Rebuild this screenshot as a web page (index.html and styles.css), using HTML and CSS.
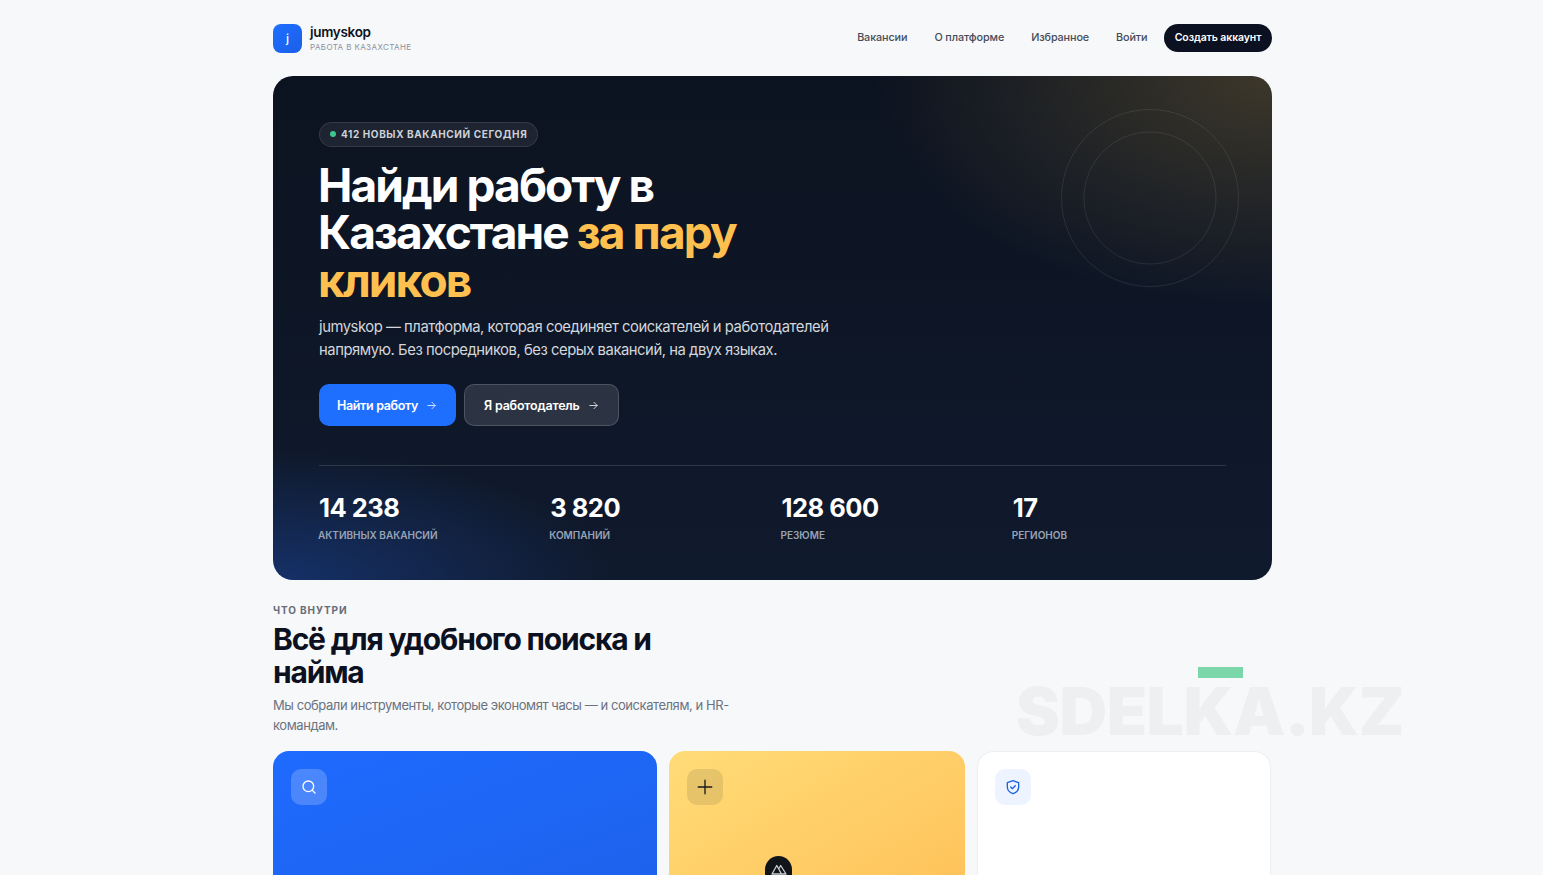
FILE: index.html
```html
<!DOCTYPE html>
<html lang="ru">
<head>
  <meta charset="UTF-8">
  <meta name="viewport" content="width=device-width, initial-scale=1.0">
  <title>jumyskop</title>
  <link rel="stylesheet" href="styles.css">
</head>
<body>
  <div class="page">
    <header class="topbar">
      <div class="brand">
        <div class="brand-mark">j</div>
        <div>
          <div class="brand-name">jumyskop</div>
          <div class="brand-sub">Работа в Казахстане</div>
        </div>
      </div>
      <nav class="nav">
        <a href="#">Вакансии</a>
        <a href="#">О платформе</a>
        <a href="#">Избранное</a>
        <a href="#">Войти</a>
        <a href="#" class="nav-cta">Создать аккаунт</a>
      </nav>
    </header>

    <section class="hero">
      <svg class="hero-rings" width="180" height="180" viewBox="0 0 180 180" fill="none" stroke="#fff" stroke-opacity=".09">
        <circle cx="90" cy="90" r="88.5"/>
        <circle cx="90" cy="90" r="66"/>
      </svg>
      <div class="hero-badge"><span class="dot"></span>412 новых вакансий сегодня</div>
      <h1>Найди работу в Казахстане <span class="accent">за пару кликов</span></h1>
      <p class="hero-text">jumyskop — платформа, которая соединяет соискателей и работодателей напрямую. Без посредников, без серых вакансий, на двух языках.</p>
      <div class="hero-actions">
        <a href="#" class="btn btn-primary">Найти работу
          <svg width="11" height="11" viewBox="0 0 24 24" fill="none" stroke="currentColor" stroke-width="2" stroke-linecap="round" stroke-linejoin="round"><path d="M4 12h16M13 5l7 7-7 7"/></svg>
        </a>
        <a href="#" class="btn btn-ghost">Я работодатель
          <svg width="11" height="11" viewBox="0 0 24 24" fill="none" stroke="currentColor" stroke-width="2" stroke-linecap="round" stroke-linejoin="round"><path d="M4 12h16M13 5l7 7-7 7"/></svg>
        </a>
      </div>
      <div class="stats">
        <div><div class="stat-num">14 238</div><div class="stat-label">Активных вакансий</div></div>
        <div><div class="stat-num">3 820</div><div class="stat-label">Компаний</div></div>
        <div><div class="stat-num">128 600</div><div class="stat-label">Резюме</div></div>
        <div><div class="stat-num">17</div><div class="stat-label">Регионов</div></div>
      </div>
    </section>

    <section class="features">
      <div class="eyebrow">Что внутри</div>
      <h2>Всё для удобного поиска и найма</h2>
      <p class="features-text">Мы собрали инструменты, которые экономят часы — и соискателям, и HR-командам.</p>
      <div class="cards">
        <div class="card card-blue">
          <div class="card-icon">
            <svg width="16" height="16" viewBox="0 0 24 24" fill="none" stroke="currentColor" stroke-width="2" stroke-linecap="round"><circle cx="11" cy="11" r="8"/><path d="M21 21l-4.3-4.3"/></svg>
          </div>
        </div>
        <div class="card card-yellow">
          <div class="card-icon">
            <svg width="18" height="18" viewBox="0 0 24 24" fill="none" stroke="currentColor" stroke-width="1.8" stroke-linecap="round"><path d="M12 3v18M3 12h18"/></svg>
          </div>
        </div>
        <div class="card card-white">
          <div class="card-icon">
            <svg width="16" height="16" viewBox="0 0 24 24" fill="none" stroke="currentColor" stroke-width="2" stroke-linecap="round" stroke-linejoin="round"><path d="M12 2.500l8.500 3v6.500c0 5-3.600 8.300-8.500 9.800-4.900-1.500-8.500-4.800-8.500-9.800V5.500z"/><path d="M8.500 12l2.500 2.500 4.500-4.500"/></svg>
          </div>
        </div>
      </div>
    </section>
  </div>

  <div class="nuxt-badge">
    <svg width="16" height="12" viewBox="0 0 16 12" fill="none" stroke="#c9ccd1" stroke-width="1.3" stroke-linejoin="round"><path d="M1 11L5.800 2.500 10.500 11zM8 5.500L9.700 2.500 15 11h-4.500"/></svg>
  </div>
  <div class="mark-green"></div>
  <div class="watermark">SDELKA.KZ</div>
</body>
</html>
```

FILE: styles.css
```css
html, body {
  height: 875px;
  overflow: hidden;
}
body {
  margin: 0;
  padding: 0;
  background-color: #f7f8fa;
  font-family: Inter, "Noto Sans", sans-serif;
  color: #0b1120;
}
a {
  text-decoration: none;
  color: inherit;
}
.page {
  width: 999px;
  margin-left: 273px;
}
.topbar {
  display: flex;
  justify-content: space-between;
  align-items: center;
  height: 76px;
  padding-bottom: 1px;
  box-sizing: border-box;
}
.brand {
  display: flex;
  align-items: center;
  gap: 8px;
  margin-top: 2px;
}
.brand-mark {
  width: 29px;
  height: 29px;
  border-radius: 8px;
  background: linear-gradient(135deg, #1f6fff, #1a5fe8);
  color: #fff;
  font-size: 12px;
  font-weight: 500;
  display: flex;
  align-items: center;
  justify-content: center;
}
.brand-name {
  padding-top: 1px;
  font-size: 13.5px;
  font-weight: 600;
  letter-spacing: -0.3px;
  line-height: 17px;
}
.brand-sub {
  font-size: 8px;
  color: #8b919c;
  text-transform: uppercase;
  letter-spacing: 0.4px;
  line-height: 13px;
}
.nav {
  display: flex;
  align-items: center;
  gap: 27px;
  font-size: 10.8px;
  font-weight: 500;
  color: #454c59;
  letter-spacing: -0.1px;
}
.nav-cta {
  margin-left: -10.5px;
  background: #0b1120;
  color: #fff;
  font-weight: 600;
  font-size: 10.5px;
  height: 28px;
  line-height: 28px;
  width: 108px;
  text-align: center;
  border-radius: 14px;
}
.hero {
  position: relative;
  height: 504px;
  box-sizing: border-box;
  padding: 45px 46px 0;
  border-radius: 20px;
  color: #fff;
  overflow: hidden;
  background:
    radial-gradient(400px 230px at 100% 0, rgba(255, 200, 80, .2), rgba(255, 200, 80, 0) 100%),
    radial-gradient(340px 130px at 0 100%, rgba(31, 90, 210, .36), rgba(31, 90, 210, 0) 100%),
    linear-gradient(180deg, #0c1320 0%, #101a2d 100%);
}
.hero-rings {
  position: absolute;
  left: 787px;
  top: 32px;
}
.hero-badge {
  display: inline-flex;
  align-items: center;
  gap: 5px;
  height: 25px;
  box-sizing: border-box;
  padding: 0 10px;
  border-radius: 13px;
  background: rgba(255, 255, 255, .07);
  border: 1px solid rgba(255, 255, 255, .1);
  font-size: 10px;
  font-weight: 700;
  letter-spacing: 0.6px;
  text-transform: uppercase;
  color: #cdd1d8;
}
.dot {
  width: 6px;
  height: 6px;
  border-radius: 50%;
  background: #3cc58f;
}
h1 {
  margin: 15px 0 0 -1px;
  width: 480px;
  font-size: 46px;
  line-height: 47.5px;
  font-weight: 700;
  letter-spacing: -1.9px;
}
.accent {
  color: #ffc04f;
}
.hero-text {
  margin: 12px 0 0;
  width: 530px;
  font-size: 14.8px;
  line-height: 23px;
  letter-spacing: -0.45px;
  color: #d3d6dc;
}
.hero-actions {
  display: flex;
  gap: 8px;
  margin-top: 22px;
}
.btn {
  display: flex;
  align-items: center;
  gap: 8px;
  height: 42px;
  box-sizing: border-box;
  border-radius: 10px;
  font-size: 12.5px;
  font-weight: 600;
  letter-spacing: -0.2px;
}
.btn svg {
  opacity: .85;
}
.btn-primary {
  width: 137px;
  padding-left: 18px;
  background: #1f6fff;
  letter-spacing: -0.35px;
}
.btn-ghost {
  width: 155px;
  padding-left: 19px;
  background: rgba(255, 255, 255, .12);
  border: 1px solid rgba(255, 255, 255, .16);
}
.stats {
  display: grid;
  grid-template-columns: repeat(4, 1fr);
  gap: 18px;
  margin-top: 39px;
  padding-top: 27px;
  border-top: 1px solid rgba(255, 255, 255, .13);
}
.stat-num {
  font-size: 25.5px;
  font-weight: 700;
  line-height: 30px;
  letter-spacing: -0.5px;
}
.stat-label {
  margin: 5px 0 0 -1px;
  font-size: 10px;
  font-weight: 600;
  line-height: 14px;
  text-transform: uppercase;
  color: #9aa3b4;
}
.features {
  padding-top: 23px;
}
.eyebrow {
  font-size: 10px;
  font-weight: 700;
  letter-spacing: 0.9px;
  line-height: 14px;
  text-transform: uppercase;
  color: #666d79;
}
h2 {
  margin: 6px 0 0;
  width: 420px;
  font-size: 30px;
  line-height: 33px;
  font-weight: 700;
  letter-spacing: -1.2px;
}
.features-text {
  margin: 7px 0 0;
  width: 460px;
  font-size: 13px;
  line-height: 19.5px;
  letter-spacing: -0.43px;
  color: #6b7280;
}
.cards {
  display: grid;
  grid-template-columns: 1.3fr 1fr 1fr;
  gap: 12px;
  margin-top: 16px;
}
.card {
  height: 300px;
  box-sizing: border-box;
  padding: 18px;
  border-radius: 16px;
}
.card-icon {
  width: 36px;
  height: 36px;
  border-radius: 10px;
  display: flex;
  align-items: center;
  justify-content: center;
}
.card-blue {
  background: linear-gradient(160deg, #1f6bff, #1b5ce0);
  color: #fff;
}
.card-blue .card-icon {
  background: rgba(255, 255, 255, .2);
}
.card-yellow {
  background: linear-gradient(150deg, #ffdc78, #ffb54a);
  color: #1a1a1a;
}
.card-yellow .card-icon {
  background: rgba(11, 17, 32, .1);
}
.card-white {
  width: 294px;
  padding: 17px;
  background: #fff;
  border: 1px solid #eceef2;
  color: #1f62e0;
}
.card-white .card-icon {
  background: #edf3ff;
}
.nuxt-badge {
  position: absolute;
  left: 765px;
  top: 856px;
  width: 27px;
  height: 40px;
  border-radius: 14px;
  background: #111418;
  display: flex;
  justify-content: center;
  padding-top: 7px;
  box-sizing: border-box;
}
.mark-green {
  position: absolute;
  left: 1198px;
  top: 667px;
  width: 45px;
  height: 11px;
  background: #7bd6a9;
}
.watermark {
  position: absolute;
  left: 1016px;
  top: 674px;
  font-size: 66px;
  font-weight: 900;
  line-height: 74px;
  letter-spacing: -0.5px;
  color: rgba(11, 17, 32, .04);
  white-space: nowrap;
}
```
